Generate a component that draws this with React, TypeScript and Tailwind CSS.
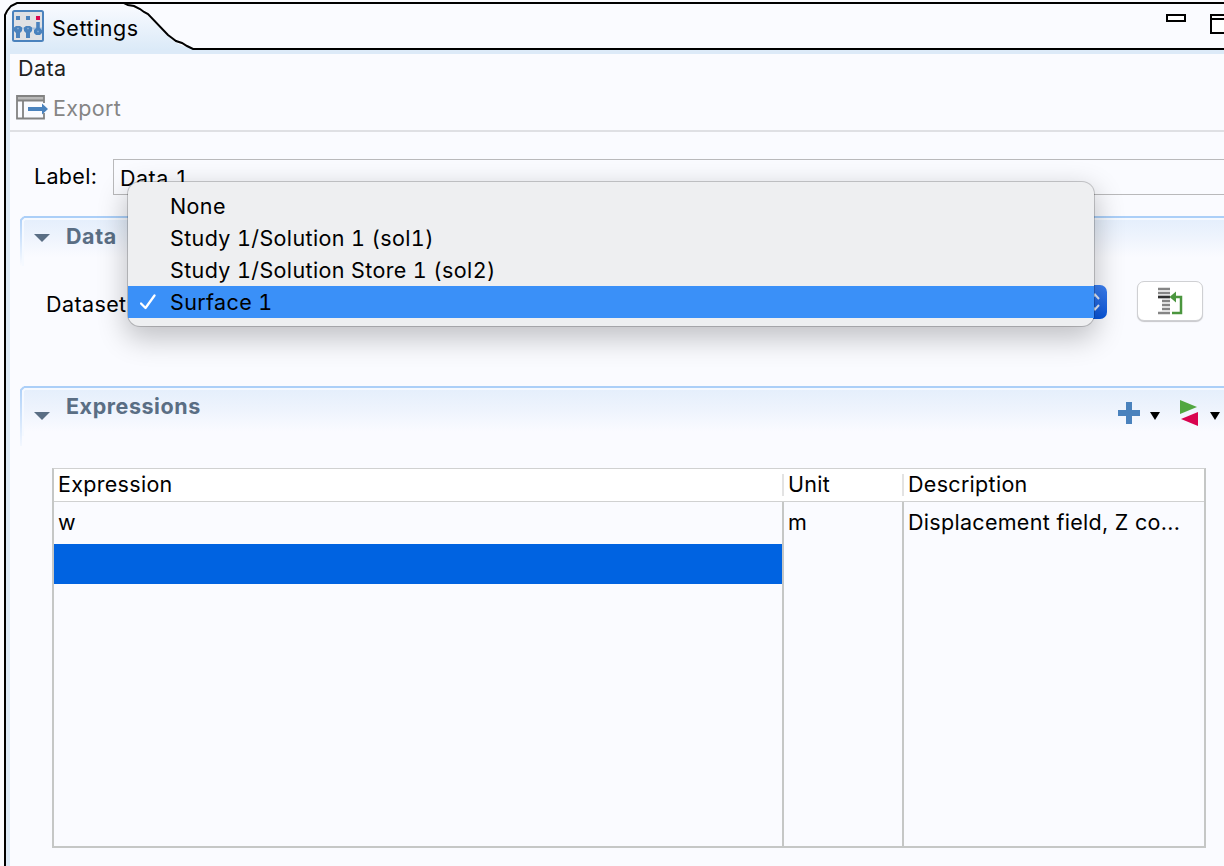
import React from "react";

function SettingsIcon() {
  return (
    <svg width="32" height="32" viewBox="0 0 32 32" className="block">
      <rect x="1" y="1" width="30" height="30" rx="1.5" fill="#e0e1e4" stroke="#4a82bd" strokeWidth="2" />
      <rect x="4" y="6" width="4" height="4" fill="#4a82bd" />
      <rect x="14" y="6" width="4" height="4" fill="#4a82bd" />
      <rect x="24" y="6" width="4" height="4" fill="#d9044f" />
      <path d="M2 18.500H30" stroke="#a9c2de" strokeWidth="2" />
      <g fill="#4a82bd">
        <path d="M2 17.500L4 16h4l2 1.500V21l-2 2v5H4v-5l-2-2z" />
        <path d="M12 17.500l2-1.500h4l2 1.500V21l-2 2v5h-4v-5l-2-2z" />
        <path d="M24.200 12h3.600v6l2.200 2v3l-2 2h-4l-2-2v-3l2.200-2z" />
      </g>
      <path d="M5 18.500h2M15 18.500h2M25 21.500h2" stroke="#7ba3ce" strokeWidth="1.500" />
    </svg>
  );
}

function ExportIcon() {
  return (
    <svg width="32" height="26" viewBox="0 0 32 26" className="block">
      <rect x="1" y="2" width="26.500" height="3.500" fill="#b9b9b9" />
      <path d="M28 1H1v22.500h27M28 0v8M28 18v6.500M1 5.500h27M7 5.500v18" fill="none" stroke="#828282" strokeWidth="1.800" />
      <path d="M12 12h14V8.500l6 5.500-6 5.500V16H12z" fill="#4a82bd" />
    </svg>
  );
}

function WindowButtons() {
  return (
    <div className="ml-auto mt-[14px] flex items-start gap-[24px]">
      <div className="h-[8px] w-[20px] border-2 border-black bg-white" />
      <div className="h-[20px] w-[14px] border-2 border-r-0 border-black bg-white">
        <div className="h-[4px] border-b-2 border-black" />
      </div>
    </div>
  );
}

function TabBar() {
  return (
    <div className="relative flex h-[50px] shrink-0">
      <svg width="1224" height="50" viewBox="0 0 1224 50" className="absolute left-0 top-0">
        <defs>
          <linearGradient id="tab" x1="0" y1="0" x2="0" y2="1">
            <stop offset="0" stopColor="#fafbff" />
            <stop offset="1" stopColor="#dbeaf8" />
          </linearGradient>
        </defs>
        <path
          d="M5 50V15C6 9 11 3 17 3H124C136 4 143 10 150 18L168 36C177 45 183 46 193 49V50z"
          fill="url(#tab)"
        />
        <path
          d="M5 50V15L7 11L11 6L17 3H1224M124 3L128 5L134 6L140 9L144 12L148 14L168 35L172 38L176 41L182 43L187 46L193 49H1224"
          fill="none"
          stroke="#000"
          strokeWidth="2"
        />
      </svg>
      <div className="relative ml-3 mt-[10px] flex h-8 items-center gap-2">
        <SettingsIcon />
        <span className="relative top-[2px] tracking-[0.55px]">Settings</span>
      </div>
      <div className="relative ml-auto flex">
        <WindowButtons />
      </div>
    </div>
  );
}

function SectionHeader({ title, low, children }: { title: string; low?: boolean; children?: React.ReactNode }) {
  return (
    <div className="relative h-[50px] shrink-0">
      <svg width="1204" height="60" viewBox="0 0 1204 60" className="absolute left-0 top-0">
        <defs>
          <linearGradient id={"fill" + title} x1="0" y1="0" x2="0" y2="1">
            <stop offset="0" stopColor="#e5effc" />
            <stop offset="0.500" stopColor="#eff4fd" />
            <stop offset="1" stopColor="#fafbff" />
          </linearGradient>
          <linearGradient id={"edge" + title} gradientUnits="userSpaceOnUse" x1="0" y1="0" x2="0" y2={low ? 66 : 50}>
            <stop offset="0" stopColor="#abcff8" />
            <stop offset="1" stopColor="#fafbff" />
          </linearGradient>
        </defs>
        <rect x="4" y="4" width="1200" height={low ? 42 : 37} fill={`url(#fill${title})`} />
        <path d="M3 50V5L5 3H1204" fill="none" stroke="#f5f9ff" strokeWidth="2" />
        <path d="M1 60V4L4 1" fill="none" stroke={`url(#edge${title})`} strokeWidth="2" />
        <path d="M4 1H1204" fill="none" stroke="#abcff8" strokeWidth="2" />
      </svg>
      <div className="relative flex h-[42px] items-center pl-[14px]">
        <svg width="16" height="8" viewBox="0 0 16 8" className={low ? "mt-[18px]" : "mt-[1px]"}>
          <path d="M0 0h16L8 8z" fill="#5a6e84" />
        </svg>
        <span className="mb-[2px] ml-[16px] text-[21.500px] font-bold tracking-[0.560px] text-[#5a6e84]">{title}</span>
        {children}
      </div>
    </div>
  );
}

function DropArrow() {
  return (
    <svg width="10" height="8" viewBox="0 0 10 8" className="mt-[5px]">
      <path d="M0 0h10L5 8z" fill="#000" />
    </svg>
  );
}

function ExpressionTools() {
  return (
    <div className="ml-auto mr-[4px] mt-[12px] flex items-center">
      <svg width="22" height="22" viewBox="0 0 22 22">
        <path d="M8 0h6v8h8v6h-8v8H8v-8H0V8h8z" fill="#4a82bd" />
      </svg>
      <span className="ml-[10px]"><DropArrow /></span>
      <svg width="18" height="26" viewBox="0 0 18 26" className="ml-[20px]">
        <path d="M0 0l17 7L0 14z" fill="#52a741" />
        <path d="M18 12v14L1 19z" fill="#d9044f" />
      </svg>
      <span className="ml-[12px]"><DropArrow /></span>
    </div>
  );
}

function GoToSourceButton() {
  return (
    <button className="flex h-[40px] w-[66px] items-center justify-center rounded-[7px] border border-[#cfd0d3] bg-white shadow-[0_1px_1px_#00000035]">
      <svg width="26" height="28" viewBox="0 0 26 28">
        <path d="M1 2h12M1 6h12M5 14h8M5 18h8M5 22h8M1 26h12" stroke="#858585" strokeWidth="2.300" />
        <path d="M1 10h12" stroke="#303030" strokeWidth="2.700" />
        <path d="M15 26h9V10h-6" fill="none" stroke="#4b963e" strokeWidth="2.500" />
        <path d="M12.500 10l6.500-5.500v11z" fill="#4b963e" />
      </svg>
    </button>
  );
}

const datasets = ["None", "Study 1/Solution 1 (sol1)", "Study 1/Solution Store 1 (sol2)", "Surface 1"];

function DatasetMenu() {
  return (
    <div className="absolute left-[128px] top-[182px] h-[144px] w-[966px] rounded-[12px] bg-[#eeeff1] pt-[8px] shadow-[0_0_0_1px_#00000030,0_10px_28px_3px_#0000003a] tracking-[0.380px] tabular-nums">
      {datasets.map((name) => (
        <div
          key={name}
          className={"flex h-8 items-center pl-[42px] " + (name === "Surface 1" ? "relative bg-[#3a90f8]" : "")}
        >
          {name === "Surface 1" && (
            <svg width="16" height="16" viewBox="0 0 16 16" className="absolute left-[12px] top-[8px]">
              <path d="M1 9.500L5.500 14L14.500 1.500" fill="none" stroke="#fff" strokeWidth="2.300" strokeLinecap="round" strokeLinejoin="round" />
            </svg>
          )}
          {name}
        </div>
      ))}
    </div>
  );
}

const columns = [
  { name: "Expression", value: "w", cls: "w-[728px]" },
  { name: "Unit", value: "m", cls: "w-[120px]" },
  { name: "Description", value: "Displacement field, Z co...", cls: "w-[302px]" },
];

function ExpressionTable() {
  return (
    <div className="ml-[42px] mt-[32px] flex h-[380px] w-[1154px] shrink-0 flex-col border-x-2 border-b-2 border-t border-[#c5c7c6] border-t-[#d0d1d1]">
      <div className="flex h-[33px] shrink-0 items-center border-b border-[#d0d1d1] bg-white">
        {columns.map((c, i) => (
          <div
            key={c.name}
            className={"flex h-[22px] items-center pb-[2px] pl-1 " + c.cls + (i ? " border-l-2 border-[#e3e3e3]" : "")}
          >
            {c.name}
          </div>
        ))}
      </div>
      <div className="flex grow">
        {columns.map((c, i) => (
          <div key={c.name} className={c.cls + (i ? " border-l-2 border-[#c5c7c6]" : "")}>
            <div className="flex h-[42px] items-center whitespace-nowrap pb-[2px] pl-1">{c.value}</div>
            {i === 0 && <div className="h-10 bg-[#0063e1]" />}
          </div>
        ))}
      </div>
    </div>
  );
}

export default function App() {
  return (
    <div className="relative flex h-[866px] w-[1224px] flex-col overflow-hidden bg-[#fafbff] font-['Inter',sans-serif] text-[21.500px] leading-[32px] tracking-[0.3px] text-black">
      <TabBar />
      <div className="ml-1 flex grow border-l-2 border-black">
        <div className="flex grow flex-col border-l-4 border-t-4 border-[#dceaf8]">
          <div className="flex h-[78px] shrink-0 flex-col border-b-2 border-[#dfe0e4]">
            <div className="h-[34px] pl-2 leading-[28px] tracking-[0.45px] text-[#222]">Data</div>
            <div className="flex items-center gap-[5px] pl-[6px] pt-[4px] text-[#858585]">
              <ExportIcon />
              <span>Export</span>
            </div>
          </div>
          <div className="mt-[27px] flex h-[36px] shrink-0 items-center pl-[24px]">
            <span className="w-[79px] pb-[2px]">Label:</span>
            <div className="flex h-[36px] grow items-center border border-r-0 border-[#b9b9bb] pl-[6px] pt-[2px] tracking-[0.5px] tabular-nums">Data 1</div>
          </div>
          <div className="ml-[10px] mt-[21px] flex flex-col">
            <SectionHeader title="Data" />
          </div>
          <div className="mt-[14px] flex h-[42px] shrink-0 items-center pl-[36px]">
            <span className="w-[86px] pt-[6px] tracking-[0.4px]">Dataset:</span>
            <div className="mt-[2px] flex h-[34px] w-[975px] items-center justify-end rounded-[7px] bg-gradient-to-b from-[#3b80f3] to-[#0555db] pr-[6px]">
              <svg width="12" height="18" viewBox="0 0 12 18">
                <path d="M2 6l4-4.500L10 6M2 12l4 4.500 4-4.500" fill="none" stroke="#e4ecfb" strokeWidth="2" />
              </svg>
            </div>
            <div className="ml-[30px]">
              <GoToSourceButton />
            </div>
          </div>
          <div className="ml-[10px] mt-[64px] flex flex-col">
            <SectionHeader title="Expressions" low>
              <ExpressionTools />
            </SectionHeader>
          </div>
          <ExpressionTable />
        </div>
      </div>
      <DatasetMenu />
    </div>
  );
}
